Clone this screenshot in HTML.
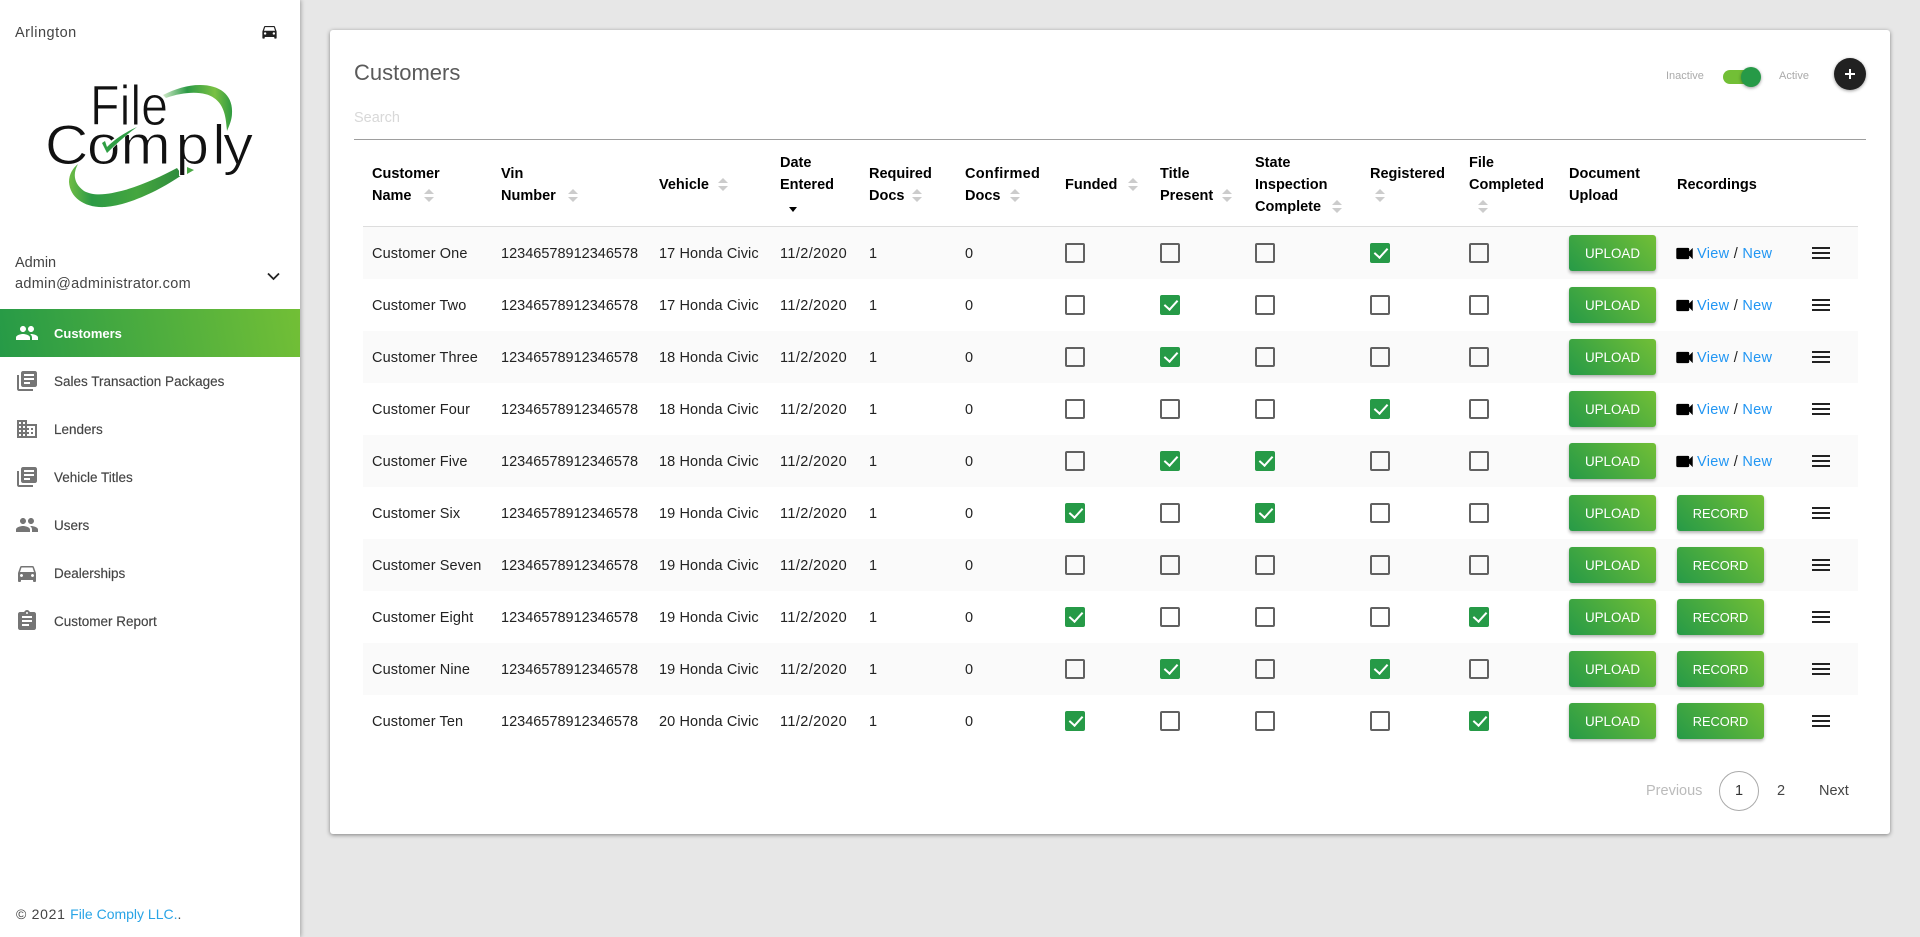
<!DOCTYPE html>
<html lang="en"><head><meta charset="utf-8"><title>Customers</title>
<style>
*{box-sizing:border-box}
html,body{margin:0;width:1920px;height:937px;overflow:hidden;background:#e7e7e7;font-family:"Liberation Sans",sans-serif;color:#333;font-size:14.5px}
.a{position:absolute;white-space:nowrap}
a{text-decoration:none}
#side{position:absolute;left:0;top:0;width:300px;height:937px;background:#fff;box-shadow:1px 0 4px rgba(0,0,0,.3)}
.m{position:absolute;left:0;width:300px;height:48px;line-height:50px;font-size:13.5px;color:#444}
.m span{position:absolute;left:54px;-webkit-text-stroke:.15px #444}
.m svg{position:absolute;left:15px;top:12px;width:24px;height:24px;fill:#757575}
.m.on{background:linear-gradient(80deg,#269a47,#72bf36);color:#fff;font-weight:bold;font-size:13px}
.m.on span{-webkit-text-stroke:0}
.m.on svg{fill:#fff}
#card{position:absolute;left:330px;top:30px;width:1560px;height:804px;background:#fff;border-radius:3px;box-shadow:0 1px 4px rgba(0,0,0,.45)}
.h{position:absolute;font-weight:bold;line-height:22px;color:#000;white-space:nowrap;margin-top:1px}
.s{position:absolute;width:10px;height:13px;margin-left:-.5px}
.s:before,.s:after{content:"";position:absolute;left:0;border-left:5px solid transparent;border-right:5px solid transparent}
.s:before{top:0;border-bottom:5.5px solid #ccc}
.s:after{bottom:0;border-top:5.5px solid #ccc}
.r{position:absolute;left:363px;width:1495px;height:52px;line-height:54px;color:#222}
.r.o{background:#fafafa}
.t{position:absolute;top:0;white-space:nowrap}
.n{left:9px;letter-spacing:.1px}.v{left:138px}.c{left:296px;letter-spacing:.1px}.d{left:417px;letter-spacing:.4px}.q{left:506px}.f{left:602px}
.b{position:absolute;top:16px;width:20px;height:20px;border:2px solid #616161;border-radius:2px}
.k{background:#269a47;border-color:#269a47}
.k:after{content:"";position:absolute;left:5px;top:0;width:6px;height:11px;border:solid #fff;border-width:0 2px 2px 0;transform:rotate(42deg)}
.x1{left:702px}.x2{left:797px}.x3{left:892px}.x4{left:1007px}.x5{left:1106px}
.u{position:absolute;top:8px;width:87px;height:36px;line-height:37px;text-align:center;color:#fff;font-size:13.4px;border-radius:3px;background:linear-gradient(45deg,#269a47,#72bf36);box-shadow:0 2px 3px rgba(0,0,0,.3)}
.u1{left:1206px}.u2{left:1314px;font-size:12.8px}
.l{left:1334px;letter-spacing:.3px}
.l a{color:#2196f3}
.vc{position:absolute;left:1310.5px;top:16px;width:21px;height:21px;fill:#000;stroke:#000;stroke-width:.8}
.ham{position:absolute;left:1449px;top:20px;width:18px;height:12px;border-top:2px solid #222;border-bottom:2px solid #222}
.ham:after{content:"";position:absolute;left:0;top:3px;width:18px;height:2px;background:#222}
</style></head><body>
<div id="side">
<div class="a" style="left:15px;top:24px;line-height:18px;color:#444;letter-spacing:.5px">Arlington</div>
<svg class="a" style="left:260px;top:22px;width:19px;height:19px" viewBox="0 0 24 24" fill="#222"><path d="M18.92 6.01C18.72 5.42 18.16 5 17.5 5h-11c-.66 0-1.21.42-1.42 1.01L3 12v8c0 .55.45 1 1 1h1c.55 0 1-.45 1-1v-1h12v1c0 .55.45 1 1 1h1c.55 0 1-.45 1-1v-8l-2.08-5.99zM6.5 16c-.83 0-1.5-.67-1.5-1.5S5.67 13 6.5 13s1.5.67 1.5 1.5S7.33 16 6.5 16zm11 0c-.83 0-1.5-.67-1.5-1.5s.67-1.5 1.5-1.5 1.5.67 1.5 1.5-.67 1.5-1.5 1.5zM5 11l1.5-4.5h11L19 11H5z"/></svg>
<svg class="a" style="left:0;top:70px;width:300px;height:150px" viewBox="0 70 300 150">
<defs><linearGradient id="g1" x1="0" y1="0" x2="1" y2="0"><stop offset="0" stop-color="#cfe8c8"/><stop offset=".35" stop-color="#2c9a45"/><stop offset=".75" stop-color="#7ac143"/><stop offset="1" stop-color="#2f9a40"/></linearGradient>
<linearGradient id="g2" x1="0" y1="0" x2="1" y2="0"><stop offset="0" stop-color="#6fbd45"/><stop offset=".2" stop-color="#2c9a45"/><stop offset=".6" stop-color="#45a63f"/><stop offset="1" stop-color="#2e8b3d"/></linearGradient></defs>
<path d="M163 95C175 89 187 85 200 85C220 85 233 95 232 113C232 120 229 126 227 131C226 122 226 106 214 98C205 91 185 91 166 98Z" fill="url(#g1)"/>
<path d="M182 175C160 190 130 205 105 207C85 208 70 198 69 182C69 174 73 168 78 164C73 173 73 183 84 191C95 197 110 194 125 190C145 184 162 176 177 168Z" fill="url(#g2)"/>
<path d="M187 167L194 170L187 174Z" fill="#4aa845"/>
<text x="90" y="125" font-size="57" textLength="78" lengthAdjust="spacingAndGlyphs" fill="#111" stroke="#fff" stroke-width="1" font-family="Liberation Sans,sans-serif">File</text>
<text transform="scale(1.08 1)" x="41.6 80.4 111.5 162.5 196.5 206.5" y="164" font-size="56" fill="#111" stroke="#fff" stroke-width="1" font-family="Liberation Sans,sans-serif">Comply</text>
<path d="M100 142L106 138L108 143C118 135 128 129 138 126C128 134 116 144 107 155Z" fill="#fff"/>
<path d="M102 143L105 141L107 147C116 138 126 132 137 127C126 135 115 145 107 153Z" fill="#2f9e44"/>
</svg>
<div class="a" style="left:15px;top:254px;line-height:18px;color:#444">Admin</div>
<div class="a" style="left:15px;top:275px;line-height:18px;color:#444;letter-spacing:.32px">admin@administrator.com</div>
<svg class="a" style="left:267px;top:272px;width:13px;height:9px" viewBox="0 0 13 9" fill="none" stroke="#222" stroke-width="1.8"><path d="M1 1.5l5.5 5.5 5.5-5.5"/></svg>
<div class="m on" style="top:309px"><svg viewBox="0 0 24 24"><path d="M16 11c1.66 0 2.99-1.34 2.99-3S17.66 5 16 5c-1.66 0-3 1.34-3 3s1.34 3 3 3zm-8 0c1.66 0 2.99-1.34 2.99-3S9.66 5 8 5C6.34 5 5 6.34 5 8s1.34 3 3 3zm0 2c-2.33 0-7 1.17-7 3.5V19h14v-2.5c0-2.33-4.67-3.5-7-3.5zm8 0c-.29 0-.62.02-.97.05 1.16.84 1.97 1.97 1.97 3.45V19h6v-2.5c0-2.33-4.67-3.5-7-3.5z"/></svg><span>Customers</span></div>
<div class="m" style="top:357px"><svg viewBox="0 0 24 24"><path d="M4 6H2v14c0 1.1.9 2 2 2h14v-2H4V6zm16-4H8c-1.1 0-2 .9-2 2v12c0 1.1.9 2 2 2h12c1.1 0 2-.9 2-2V4c0-1.1-.9-2-2-2zm-1 9H9V9h10v2zm-4 4H9v-2h6v2zm4-8H9V5h10v2z"/></svg><span>Sales Transaction Packages</span></div>
<div class="m" style="top:405px"><svg viewBox="0 0 24 24"><path d="M12 7V3H2v18h20V7H12zM6 19H4v-2h2v2zm0-4H4v-2h2v2zm0-4H4V9h2v2zm0-4H4V5h2v2zm4 12H8v-2h2v2zm0-4H8v-2h2v2zm0-4H8V9h2v2zm0-4H8V5h2v2zm10 12h-8v-2h2v-2h-2v-2h2v-2h-2V9h8v10zm-2-8h-2v2h2v-2zm0 4h-2v2h2v-2z"/></svg><span>Lenders</span></div>
<div class="m" style="top:453px"><svg viewBox="0 0 24 24"><path d="M4 6H2v14c0 1.1.9 2 2 2h14v-2H4V6zm16-4H8c-1.1 0-2 .9-2 2v12c0 1.1.9 2 2 2h12c1.1 0 2-.9 2-2V4c0-1.1-.9-2-2-2zm-1 9H9V9h10v2zm-4 4H9v-2h6v2zm4-8H9V5h10v2z"/></svg><span>Vehicle Titles</span></div>
<div class="m" style="top:501px"><svg viewBox="0 0 24 24"><path d="M16 11c1.66 0 2.99-1.34 2.99-3S17.66 5 16 5c-1.66 0-3 1.34-3 3s1.34 3 3 3zm-8 0c1.66 0 2.99-1.34 2.99-3S9.66 5 8 5C6.34 5 5 6.34 5 8s1.34 3 3 3zm0 2c-2.33 0-7 1.17-7 3.5V19h14v-2.5c0-2.33-4.67-3.5-7-3.5zm8 0c-.29 0-.62.02-.97.05 1.16.84 1.97 1.97 1.97 3.45V19h6v-2.5c0-2.33-4.67-3.5-7-3.5z"/></svg><span>Users</span></div>
<div class="m" style="top:549px"><svg viewBox="0 0 24 24"><path d="M18.92 6.01C18.72 5.42 18.16 5 17.5 5h-11c-.66 0-1.21.42-1.42 1.01L3 12v8c0 .55.45 1 1 1h1c.55 0 1-.45 1-1v-1h12v1c0 .55.45 1 1 1h1c.55 0 1-.45 1-1v-8l-2.08-5.99zM6.5 16c-.83 0-1.5-.67-1.5-1.5S5.67 13 6.5 13s1.5.67 1.5 1.5S7.33 16 6.5 16zm11 0c-.83 0-1.5-.67-1.5-1.5s.67-1.5 1.5-1.5 1.5.67 1.5 1.5-.67 1.5-1.5 1.5zM5 11l1.5-4.5h11L19 11H5z"/></svg><span>Dealerships</span></div>
<div class="m" style="top:597px"><svg viewBox="0 0 24 24"><path d="M19 3h-4.18C14.4 1.84 13.3 1 12 1c-1.3 0-2.4.84-2.82 2H5c-1.1 0-2 .9-2 2v14c0 1.1.9 2 2 2h14c1.1 0 2-.9 2-2V5c0-1.1-.9-2-2-2zm-7 0c.55 0 1 .45 1 1s-.45 1-1 1-1-.45-1-1 .45-1 1-1zm2 14H7v-2h7v2zm3-4H7v-2h10v2zm0-4H7V7h10v2z"/></svg><span>Customer Report</span></div>
<div class="a" style="left:16px;top:905px;line-height:18px;font-size:14px;color:#444"><span style="letter-spacing:.7px">© 2021 </span><a style="color:#29a4e6" href="#">File Comply LLC.</a>.</div>
</div>

<div id="card"></div>
<div class="a" style="left:354px;top:59px;line-height:28px;font-size:22px;color:#5a5a5a">Customers</div>
<div class="a" style="left:354px;top:109px;line-height:18px;color:#d8d8d8">Search</div>
<div class="a" style="left:354px;top:139px;width:1512px;height:1px;background:#9e9e9e"></div>
<div class="a" style="left:1666px;top:69px;line-height:14px;font-size:11px;color:#aaa">Inactive</div>
<div class="a" style="left:1723px;top:70px;width:34px;height:14px;border-radius:7px;background:#72bf36"></div>
<div class="a" style="left:1741px;top:67px;width:20px;height:20px;border-radius:50%;background:#269a47;box-shadow:0 1px 3px rgba(0,0,0,.4)"></div>
<div class="a" style="left:1779px;top:69px;line-height:14px;font-size:11px;color:#aaa">Active</div>
<div class="a" style="left:1834px;top:58px;width:32px;height:32px;border-radius:50%;background:#212121;box-shadow:0 1px 3px rgba(0,0,0,.4)"></div>
<div class="a" style="left:1845px;top:73px;width:10px;height:2px;background:#fff"></div>
<div class="a" style="left:1849px;top:69px;width:2px;height:10px;background:#fff"></div>

<div class="h" style="left:372px;top:162px">Customer<br>Name</div><i class="s" style="left:424px;top:189px"></i>
<div class="h" style="left:501px;top:162px">Vin<br>Number</div><i class="s" style="left:568px;top:189px"></i>
<div class="h" style="left:659px;top:173px">Vehicle</div><i class="s" style="left:718px;top:178px"></i>
<div class="h" style="left:780px;top:151px">Date<br>Entered</div><i class="a" style="left:789px;top:207px;border-left:4.5px solid transparent;border-right:4.5px solid transparent;border-top:5px solid #000"></i>
<div class="h" style="left:869px;top:162px">Required<br>Docs</div><i class="s" style="left:912px;top:189px"></i>
<div class="h" style="left:965px;top:162px"><span style="letter-spacing:.3px">Confirmed</span><br>Docs</div><i class="s" style="left:1010px;top:189px"></i>
<div class="h" style="left:1065px;top:173px">Funded</div><i class="s" style="left:1128px;top:178px"></i>
<div class="h" style="left:1160px;top:162px">Title<br>Present</div><i class="s" style="left:1222px;top:189px"></i>
<div class="h" style="left:1255px;top:151px">State<br>Inspection<br>Complete</div><i class="s" style="left:1332px;top:200px"></i>
<div class="h" style="left:1370px;top:162px">Registered</div><i class="s" style="left:1375px;top:189px"></i>
<div class="h" style="left:1469px;top:151px">File<br>Completed</div><i class="s" style="left:1478px;top:200px"></i>
<div class="h" style="left:1569px;top:162px">Document<br>Upload</div>
<div class="h" style="left:1677px;top:173px">Recordings</div>
<div class="a" style="left:363px;top:226px;width:1495px;height:1px;background:#ddd"></div>

<svg width="0" height="0" style="position:absolute"><symbol id="vid" viewBox="0 0 24 24"><path d="M17 10.5V7c0-.55-.45-1-1-1H4c-.55 0-1 .45-1 1v10c0 .55.45 1 1 1h12c.55 0 1-.45 1-1v-3.5l4 4v-11l-4 4z"/></symbol></svg>

<div class="r o" style="top:227px"><span class="t n">Customer One</span><span class="t v">12346578912346578</span><span class="t c">17 Honda Civic</span><span class="t d">11/2/2020</span><span class="t q">1</span><span class="t f">0</span><i class="b x1"></i><i class="b x2"></i><i class="b x3"></i><i class="b k x4"></i><i class="b x5"></i><div class="u u1">UPLOAD</div><svg class="vc"><use href="#vid"/></svg><span class="t l"><a href="#">View</a> / <a href="#">New</a></span><i class="ham"></i></div>
<div class="r" style="top:279px"><span class="t n">Customer Two</span><span class="t v">12346578912346578</span><span class="t c">17 Honda Civic</span><span class="t d">11/2/2020</span><span class="t q">1</span><span class="t f">0</span><i class="b x1"></i><i class="b k x2"></i><i class="b x3"></i><i class="b x4"></i><i class="b x5"></i><div class="u u1">UPLOAD</div><svg class="vc"><use href="#vid"/></svg><span class="t l"><a href="#">View</a> / <a href="#">New</a></span><i class="ham"></i></div>
<div class="r o" style="top:331px"><span class="t n">Customer Three</span><span class="t v">12346578912346578</span><span class="t c">18 Honda Civic</span><span class="t d">11/2/2020</span><span class="t q">1</span><span class="t f">0</span><i class="b x1"></i><i class="b k x2"></i><i class="b x3"></i><i class="b x4"></i><i class="b x5"></i><div class="u u1">UPLOAD</div><svg class="vc"><use href="#vid"/></svg><span class="t l"><a href="#">View</a> / <a href="#">New</a></span><i class="ham"></i></div>
<div class="r" style="top:383px"><span class="t n">Customer Four</span><span class="t v">12346578912346578</span><span class="t c">18 Honda Civic</span><span class="t d">11/2/2020</span><span class="t q">1</span><span class="t f">0</span><i class="b x1"></i><i class="b x2"></i><i class="b x3"></i><i class="b k x4"></i><i class="b x5"></i><div class="u u1">UPLOAD</div><svg class="vc"><use href="#vid"/></svg><span class="t l"><a href="#">View</a> / <a href="#">New</a></span><i class="ham"></i></div>
<div class="r o" style="top:435px"><span class="t n">Customer Five</span><span class="t v">12346578912346578</span><span class="t c">18 Honda Civic</span><span class="t d">11/2/2020</span><span class="t q">1</span><span class="t f">0</span><i class="b x1"></i><i class="b k x2"></i><i class="b k x3"></i><i class="b x4"></i><i class="b x5"></i><div class="u u1">UPLOAD</div><svg class="vc"><use href="#vid"/></svg><span class="t l"><a href="#">View</a> / <a href="#">New</a></span><i class="ham"></i></div>
<div class="r" style="top:487px"><span class="t n">Customer Six</span><span class="t v">12346578912346578</span><span class="t c">19 Honda Civic</span><span class="t d">11/2/2020</span><span class="t q">1</span><span class="t f">0</span><i class="b k x1"></i><i class="b x2"></i><i class="b k x3"></i><i class="b x4"></i><i class="b x5"></i><div class="u u1">UPLOAD</div><div class="u u2">RECORD</div><i class="ham"></i></div>
<div class="r o" style="top:539px"><span class="t n">Customer Seven</span><span class="t v">12346578912346578</span><span class="t c">19 Honda Civic</span><span class="t d">11/2/2020</span><span class="t q">1</span><span class="t f">0</span><i class="b x1"></i><i class="b x2"></i><i class="b x3"></i><i class="b x4"></i><i class="b x5"></i><div class="u u1">UPLOAD</div><div class="u u2">RECORD</div><i class="ham"></i></div>
<div class="r" style="top:591px"><span class="t n">Customer Eight</span><span class="t v">12346578912346578</span><span class="t c">19 Honda Civic</span><span class="t d">11/2/2020</span><span class="t q">1</span><span class="t f">0</span><i class="b k x1"></i><i class="b x2"></i><i class="b x3"></i><i class="b x4"></i><i class="b k x5"></i><div class="u u1">UPLOAD</div><div class="u u2">RECORD</div><i class="ham"></i></div>
<div class="r o" style="top:643px"><span class="t n">Customer Nine</span><span class="t v">12346578912346578</span><span class="t c">19 Honda Civic</span><span class="t d">11/2/2020</span><span class="t q">1</span><span class="t f">0</span><i class="b x1"></i><i class="b k x2"></i><i class="b x3"></i><i class="b k x4"></i><i class="b x5"></i><div class="u u1">UPLOAD</div><div class="u u2">RECORD</div><i class="ham"></i></div>
<div class="r" style="top:695px"><span class="t n">Customer Ten</span><span class="t v">12346578912346578</span><span class="t c">20 Honda Civic</span><span class="t d">11/2/2020</span><span class="t q">1</span><span class="t f">0</span><i class="b k x1"></i><i class="b x2"></i><i class="b x3"></i><i class="b x4"></i><i class="b k x5"></i><div class="u u1">UPLOAD</div><div class="u u2">RECORD</div><i class="ham"></i></div>

<div class="a" style="left:1646px;top:782px;line-height:18px;color:#bbb">Previous</div>
<div class="a" style="left:1719px;top:771px;width:40px;height:40px;border:1px solid #aaa;border-radius:50%;line-height:38px;text-align:center;color:#333">1</div>
<div class="a" style="left:1777px;top:782px;line-height:18px;color:#444">2</div>
<div class="a" style="left:1819px;top:782px;line-height:18px;color:#444">Next</div>
</body></html>
